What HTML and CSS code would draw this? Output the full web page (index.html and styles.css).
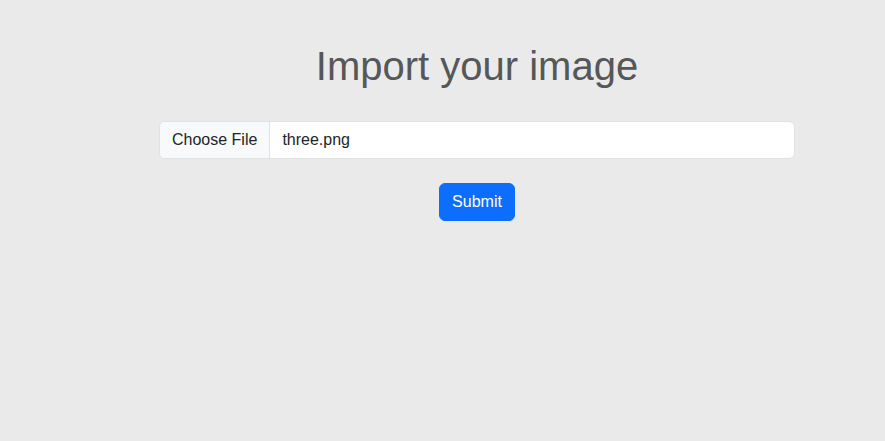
FILE: index.html
```html
<!DOCTYPE html>
<html lang="en">
<head>
<meta charset="utf-8">
<title>Import your image</title>
<link rel="stylesheet" href="styles.css">
</head>
<body>
<main class="page">
  <h1 class="title">Import your image</h1>
  <form class="form">
    <div class="file-input">
      <span class="file-btn">Choose File</span>
      <span class="file-name">three.png</span>
    </div>
    <button type="button" class="submit">Submit</button>
  </form>
</main>
</body>
</html>
```
FILE: styles.css
```css
html, body {
  margin: 0;
  padding: 0;
  background: #eaeaea;
  font-family: "Liberation Sans", Arial, sans-serif;
}
.page {
  width: 636px;
  margin-left: 159px;
  padding-top: 42px;
  display: flex;
  flex-direction: column;
  align-items: center;
}
.title {
  margin: 0;
  font-size: 40px;
  font-weight: 400;
  line-height: 48px;
  color: #555759;
}
.form {
  width: 100%;
  margin-top: 31px;
  display: flex;
  flex-direction: column;
  align-items: center;
  gap: 24px;
}
.file-input {
  width: 100%;
  box-sizing: border-box;
  height: 38px;
  display: flex;
  align-items: center;
  background: #fff;
  border: 1px solid #dee2e6;
  border-radius: 6px;
  overflow: hidden;
  font-size: 16px;
  color: #212529;
}
.file-btn {
  height: 100%;
  display: flex;
  align-items: center;
  padding: 0 12px;
  background: #f8f9fa;
  border-right: 1px solid #dee2e6;
}
.file-name {
  padding-left: 12px;
}
.submit {
  height: 38px;
  padding: 0 12px;
  border: 1px solid #0d6efd;
  border-radius: 6px;
  background: #0d6efd;
  color: #fff;
  font-family: "Liberation Sans", Arial, sans-serif;
  font-size: 16px;
}
```
